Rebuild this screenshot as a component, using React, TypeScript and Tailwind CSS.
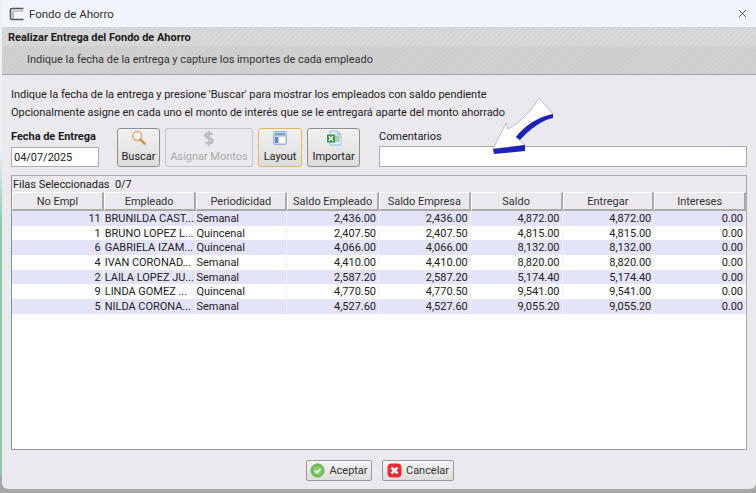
import React from 'react'
import { X } from 'lucide-react'

const columns = ['No Empl', 'Empleado', 'Periodicidad', 'Saldo Empleado', 'Saldo Empresa', 'Saldo', 'Entregar', 'Intereses']

const rows = [
  ['11', 'BRUNILDA CAST...', 'Semanal', '2,436.00', '2,436.00', '4,872.00', '4,872.00', '0.00'],
  ['1', 'BRUNO LOPEZ L...', 'Quincenal', '2,407.50', '2,407.50', '4,815.00', '4,815.00', '0.00'],
  ['6', 'GABRIELA IZAM...', 'Quincenal', '4,066.00', '4,066.00', '8,132.00', '8,132.00', '0.00'],
  ['4', 'IVAN CORONAD...', 'Semanal', '4,410.00', '4,410.00', '8,820.00', '8,820.00', '0.00'],
  ['2', 'LAILA LOPEZ JU...', 'Semanal', '2,587.20', '2,587.20', '5,174.40', '5,174.40', '0.00'],
  ['9', 'LINDA GOMEZ ...', 'Quincenal', '4,770.50', '4,770.50', '9,541.00', '9,541.00', '0.00'],
  ['5', 'NILDA CORONA...', 'Semanal', '4,527.60', '4,527.60', '9,055.20', '9,055.20', '0.00'],
]

const SearchIcon = () => (
  <svg width="16" height="16" viewBox="0 0 16 16">
    <circle cx="6.2" cy="6" r="4.4" fill="#faf6ee" stroke="#d8ad78" strokeWidth="1.5" />
    <path d="M9.6 9.6 L13.6 13.6" stroke="#c9924f" strokeWidth="2.6" strokeLinecap="round" />
  </svg>
)

const DollarIcon = () => (
  <svg width="16" height="17" viewBox="0 0 16 17">
    <path d="M11.5 4.6 C10.5 3.2 4.6 2.8 4.6 5.6 C4.6 8.6 11.5 7.6 11.5 11 C11.5 13.8 5.4 13.6 4.4 12" fill="none" stroke="#bcbcbc" strokeWidth="2.6" />
    <path d="M8 0.5 V16.5" stroke="#bcbcbc" strokeWidth="1.6" />
  </svg>
)

const LayoutIcon = () => (
  <svg width="16" height="16" viewBox="0 0 16 16">
    <rect x="1.5" y="1.5" width="13" height="13" rx="1.5" fill="#c4d4ec" stroke="#9fb4d4" />
    <rect x="3" y="3" width="10" height="2.5" fill="#7f9fd0" />
    <rect x="7" y="7" width="6" height="6" fill="#fff" />
    <rect x="3" y="7" width="3" height="6" fill="#5f87c0" />
  </svg>
)

const ExcelIcon = () => (
  <svg width="16" height="16" viewBox="0 0 16 16">
    <path d="M4 1 H11.5 L15 4.5 V15 H4 Z" fill="#dfeefa" stroke="#9cc0e0" />
    <path d="M11.5 1 V4.5 H15" fill="#bcd4ea" stroke="#9cc0e0" />
    <rect x="8" y="5.5" width="5.5" height="6.5" fill="#a8cfa8" />
    <rect x="1" y="4.5" width="8" height="8" fill="#3f8f4f" />
    <path d="M2.8 6.3 L7.2 10.7 M7.2 6.3 L2.8 10.7" stroke="#fff" strokeWidth="1.3" />
  </svg>
)

const OkIcon = () => (
  <svg width="15" height="15" viewBox="0 0 15 15">
    <circle cx="7.5" cy="7.5" r="6.8" fill="#6fb552" stroke="#8cc486" />
    <circle cx="7.5" cy="7.5" r="4.6" fill="#8ac96e" />
    <path d="M4.6 7.6 L6.8 9.6 L10.6 5.8" fill="none" stroke="#f4f8f2" strokeWidth="1.8" />
  </svg>
)

const CancelIcon = () => (
  <svg width="15" height="15" viewBox="0 0 15 15">
    <rect x="0.5" y="0.5" width="14" height="14" rx="4" fill="#ee2b35" />
    <path d="M4.6 4.6 L10.4 10.4 M10.4 4.6 L4.6 10.4" stroke="#fff" strokeWidth="2.6" />
  </svg>
)

export default function App() {
  return (
    <div className="relative flex h-[493px] w-[756px] overflow-hidden bg-[linear-gradient(180deg,#eef1f6_0%,#eef1f6_30%,#8fc9ae_45%,#8fc9ae_96%,#a6a6a6_97%)] font-['Roboto',sans-serif] text-[11px] leading-[14px] tracking-[-0.03px] text-[#222]">
      <div className="ml-[2px] flex h-[489px] flex-1 flex-col overflow-hidden rounded-b-[6px] rounded-tl-[6px] bg-[#ebe9ee]">
        {/* title bar */}
        <div className="flex h-[27px] shrink-0 items-center bg-[#f2f5fb] pl-[7px] pr-[6px]">
          <svg width="16" height="16" viewBox="0 0 16 16" className="mr-[4px]">
            <path d="M14.5 2.5 H3 Q1.5 2.5 1.5 4 V12 Q1.5 13.5 3 13.5 H14.5" fill="none" stroke="#555" strokeWidth="1.6" />
            <path d="M14.5 5 H5 Q4 5 4 6 V13" fill="none" stroke="#999" strokeWidth="1.2" />
          </svg>
          <span className="text-[11.5px] text-[#333]">Fondo de Ahorro</span>
          <X className="ml-auto mr-[1px] text-[#333]" size={13} strokeWidth={1.5} />
        </div>

        {/* encabezado */}
        <div className="h-[48px] shrink-0 border-b border-[#a4a4a4] bg-[repeating-linear-gradient(135deg,#d4d4d4_0px,#d4d4d4_2px,#d9d9d9_2px,#d9d9d9_4px)]">
          <div className="flex h-[19px] items-end pb-[1px] pl-[6px] font-bold text-[#1b1b1b]">Realizar Entrega del Fondo de Ahorro</div>
          <div className="flex h-[28px] items-center bg-[#bbb]/25 pl-[25px] text-[#333]">Indique la fecha de la entrega y capture los importes de cada empleado</div>
        </div>

        <div className="flex min-h-0 flex-1 flex-col pl-[9px] pr-[9px]">
          <div className="mt-[13px] flex flex-col gap-[4px]">
            <div>Indique la fecha de la entrega y presione 'Buscar' para mostrar los empleados con saldo pendiente</div>
            <div>Opcionalmente asigne en cada uno el monto de interés que se le entregará aparte del monto ahorrado</div>
          </div>

          <div className="mt-[8px] flex h-[39px] items-end">
            <div className="flex w-[88px] flex-col gap-[3px]">
              <label className="whitespace-nowrap font-bold text-[#1b1b1b]">Fecha de Entrega</label>
              <input readOnly value="04/07/2025" className="h-[20px] w-full border border-[#adadad] bg-white px-[2px] outline-none" />
            </div>
            <div className="ml-[18px] flex gap-[5px]">
              <button className="flex h-[39px] w-[43px] flex-col items-center justify-between rounded-[3px] border border-[#8f8f8f] bg-gradient-to-b from-[#f2f2f2] to-[#dcdcdc] pb-[2px] pt-[1px] text-[#222]">
                <SearchIcon />
                <span>Buscar</span>
              </button>
              <button className="flex h-[39px] w-[88px] flex-col items-center justify-between rounded-[3px] border border-[#c4c4c4] bg-[#ebe9ee] pb-[2px] pt-[1px] text-[#a9a9a9]">
                <DollarIcon />
                <span>Asignar Montos</span>
              </button>
              <button className="flex h-[39px] w-[44px] flex-col items-center justify-between rounded-[3px] border border-[#e3b568] bg-gradient-to-b from-[#f2f2f2] to-[#dcdcdc] pb-[2px] pt-[1px] text-[#222]">
                <LayoutIcon />
                <span>Layout</span>
              </button>
              <button className="flex h-[39px] w-[53px] flex-col items-center justify-between rounded-[3px] border border-[#8f8f8f] bg-gradient-to-b from-[#f2f2f2] to-[#dcdcdc] pb-[2px] pt-[1px] text-[#222]">
                <ExcelIcon />
                <span>Importar</span>
              </button>
            </div>
            <div className="ml-[19px] flex w-[368px] flex-col gap-[2px]">
              <label className="text-[#222]">Comentarios</label>
              <input readOnly className="h-[21px] w-full border border-[#adadad] bg-white outline-none" />
            </div>
          </div>

          {/* tabla */}
          <div className="mt-[8px] flex min-h-0 flex-1 flex-col border border-b-[#9a9a9a] border-l-[#8f8f8f] border-r-[#a8a8a8] border-t-[#a8a8a8]">
            <div className="flex h-[16px] shrink-0 items-center bg-[#ebe9ee] pl-[1px] pt-[1px]">Filas Seleccionadas&nbsp; 0/7</div>
            <div className="flex min-h-0 flex-1 flex-col bg-white">
              <div className="grid h-[19px] shrink-0 grid-cols-8 bg-[#ebe9ee]">
                {columns.map(c => (
                  <div key={c} className="flex items-center justify-center border-b-2 border-l border-r-2 border-t border-b-[#a9a9a9] border-l-white border-r-[#a9a9a9] border-t-white pt-[1px] text-[#333]">{c}</div>
                ))}
              </div>
              {rows.map((row, i) => (
                <div key={row[0]} className={`grid h-[14.67px] grid-cols-8 ${i % 2 === 0 ? 'bg-[#e3e3f9]' : 'bg-white'}`}>
                  {row.map((cell, j) => (
                    <div key={j} className={`whitespace-nowrap border-r border-[#f0f0f5] px-[1px] leading-[16px] ${j === 1 || j === 2 ? 'text-left' : 'pr-[2px] text-right'}`}>{cell}</div>
                  ))}
                </div>
              ))}
            </div>
          </div>
        </div>

        {/* botones */}
        <div className="flex h-[39px] shrink-0 items-start justify-center gap-[10px] pl-[2px] pt-[10px]">
          <button className="flex h-[21px] w-[66px] items-center justify-center gap-[4px] rounded-[2px] border border-[#9a9a9a] bg-gradient-to-b from-[#f4f4f4] to-[#dedede] text-[#333]">
            <OkIcon />
            <span>Aceptar</span>
          </button>
          <button className="flex h-[21px] w-[72px] items-center justify-center gap-[4px] rounded-[2px] border border-[#9a9a9a] bg-gradient-to-b from-[#f4f4f4] to-[#dedede] text-[#333]">
            <CancelIcon />
            <span>Cancelar</span>
          </button>
        </div>
      </div>

      {/* flecha encima de la pantalla */}
      <svg className="absolute left-[490px] top-[95px]" width="70" height="62" viewBox="0 0 70 62">
        <path d="M49 3 L63 19 C48 22 36 31 26 42 L35 50 L3 54 L16 28 L18 34 C30 28 42 15 49 3 Z" fill="#fff" stroke="#a9a9cf" strokeWidth="0.8" />
        <path d="M63 19 L63 23 C52 25 40 34 30 45 L26 42 C34 31 48 22 63 19 Z" fill="#1c22b8" />
        <path d="M3 54 L35 50 L35 56 L4 59 Z" fill="#1c22b8" />
      </svg>
    </div>
  )
}
